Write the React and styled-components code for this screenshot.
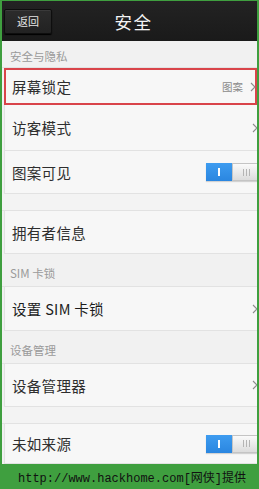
import React from "react";
import styled, { createGlobalStyle } from "styled-components";

const Global = createGlobalStyle`
  html, body { margin: 0; padding: 0; background: #3f9f3f; }
  body { font-family: "Noto Sans CJK SC", "Noto Sans", sans-serif; }
`;

const Frame = styled.div`
  width: 259px;
  height: 489px;
  box-sizing: border-box;
  padding: 1px 2px 0 2px;
  background: #3f9f3f;
  display: flex;
  flex-direction: column;
  overflow: hidden;
`;

const Screen = styled.div`
  height: 463px;
  background: #f1f1f1;
  display: flex;
  flex-direction: column;
  overflow: hidden;
`;

const Header = styled.div`
  height: 40px;
  flex: none;
  background: linear-gradient(#232323, #1a1a1a);
  display: grid;
  grid-template-columns: 1fr auto 1fr;
  align-items: center;
  padding-left: 2px;
`;

const BackButton = styled.div`
  justify-self: start;
  width: 48px;
  height: 25px;
  box-sizing: border-box;
  background: linear-gradient(#2c2c2c, #222);
  border: 1px solid #0e0e0e;
  border-radius: 2px;
  box-shadow: inset 0 1px 0 #3a3a3a, 0 1px 1px #000;
  color: #e4e4e4;
  font-size: 11px;
  display: flex;
  align-items: center;
  justify-content: center;
`;

const Title = styled.div`
  color: #f4f4f4;
  font-size: 17.5px;
  padding-left: 6px;
  letter-spacing: 1.5px;
`;

const SectionHeader = styled.div`
  height: ${(p) => p.h}px;
  flex: none;
  box-sizing: border-box;
  display: flex;
  align-items: flex-end;
  padding: 0 0 ${(p) => p.pb}px 8px;
  color: #9a9a9a;
  font-size: 11.5px;
  border-bottom: 1px solid #e2e2e2;
`;

const Row = styled.div`
  height: ${(p) => p.h}px;
  flex: none;
  box-sizing: border-box;
  margin-left: 2px;
  display: flex;
  align-items: center;
  padding: 0 0 0 7px;
  background: #f7f7f7;
  border-left: 1px solid #e2e2e2;
  border-bottom: 1px solid #e2e2e2;
  ${(p) =>
    p.highlight &&
    `border: 2px solid #d9444a; padding-left: 6px;`}
`;

const Gap = styled.div`
  height: ${(p) => p.h}px;
  flex: none;
  box-sizing: border-box;
  background: #f3f3f3;
  border-bottom: 1px solid #e2e2e2;
`;

const Label = styled.div`
  flex: 1;
  color: ${(p) => (p.strong ? "#1c1c1c" : "#2e2e2e")};
  font-size: 14.5px;
  letter-spacing: 0.3px;
`;

const Value = styled.span`
  color: #8a8a8a;
  font-size: 10.5px;
  margin-right: 7px;
`;

const ChevronIcon = styled.svg`
  flex: none;
  margin-right: -1px;
`;

const Chevron = () => (
  <ChevronIcon width="6" height="10" viewBox="0 0 6 10">
    <path d="M1 1 L5 5 L1 9" fill="none" stroke="#8c8c8c" strokeWidth="1.1" />
  </ChevronIcon>
);

const Toggle = styled.div`
  width: 54px;
  height: 18px;
  display: flex;
  margin-right: -3px;
  box-shadow: 0 1px 1px rgba(0,0,0,0.15);
`;

const ToggleOn = styled.div`
  width: 26px;
  background: linear-gradient(#3e9cf0, #2a86e0);
  display: flex;
  align-items: center;
  justify-content: center;
  &::after {
    content: "";
    width: 2px;
    height: 8px;
    background: #fff;
  }
`;

const ToggleKnob = styled.div`
  flex: 1;
  box-sizing: border-box;
  border: 1px solid #c4c4c4;
  background: linear-gradient(#fafafa, #dcdcdc);
  display: flex;
  align-items: center;
  justify-content: center;
  gap: 2px;
`;

const Grip = styled.span`
  width: 1px;
  height: 7px;
  background: #b4b4b4;
`;

const Switch = () => (
  <Toggle>
    <ToggleOn />
    <ToggleKnob>
      <Grip />
      <Grip />
      <Grip />
    </ToggleKnob>
  </Toggle>
);

const Footer = styled.div`
  flex: 1;
  display: flex;
  align-items: center;
  padding-left: 16px;
  color: #111;
  font-family: "Liberation Mono", "Noto Sans CJK SC", monospace;
  font-size: 12px;
  white-space: nowrap;
`;

export default function App() {
  return (
    <>
      <Global />
      <Frame>
        <Screen>
          <Header>
            <BackButton>返回</BackButton>
            <Title>安全</Title>
            <div />
          </Header>
          <SectionHeader h={27} pb={3}>安全与隐私</SectionHeader>
          <Row h={37} highlight>
            <Label>屏幕锁定</Label>
            <Value>图案</Value>
            <Chevron />
          </Row>
          <Row h={46}>
            <Label>访客模式</Label>
            <Chevron />
          </Row>
          <Row h={43}>
            <Label>图案可见</Label>
            <Switch />
          </Row>
          <Gap h={17} />
          <Row h={43}>
            <Label>拥有者信息</Label>
          </Row>
          <SectionHeader h={33} pb={5}>SIM 卡锁</SectionHeader>
          <Row h={44}>
            <Label strong>设置 SIM 卡锁</Label>
            <Chevron />
          </Row>
          <SectionHeader h={33} pb={5}>设备管理</SectionHeader>
          <Row h={43}>
            <Label>设备管理器</Label>
            <Chevron />
          </Row>
          <Gap h={17} />
          <Row h={40}>
            <Label>未如来源</Label>
            <Switch />
          </Row>
        </Screen>
        <Footer>http://www.hackhome.com[网侠]提供</Footer>
      </Frame>
    </>
  );
}
